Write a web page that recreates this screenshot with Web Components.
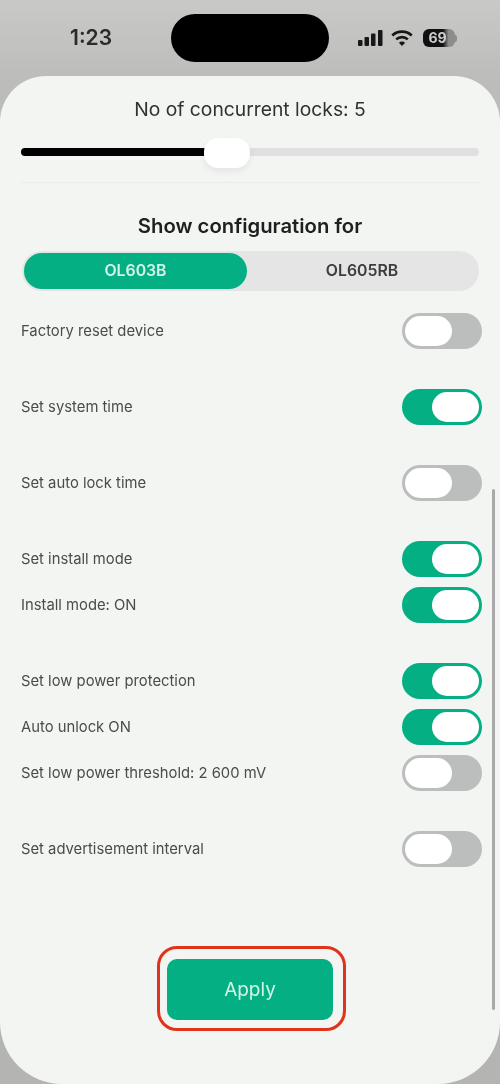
<!DOCTYPE html>
<html>
<head>
<meta charset="utf-8">
<style>
  html, body { margin: 0; padding: 0; height: 100%; }
  body { font-family: Inter, "Liberation Sans", sans-serif; color: #2e3030; }
</style>
</head>
<body>
<phone-screen>
  <status-bar slot="status" time="1:23" battery="69"></status-bar>
  <lock-slider label="No of concurrent locks: 5" percent="45"></lock-slider>
  <segment-picker title="Show configuration for" first="OL603B" second="OL605RB"></segment-picker>
  <setting-group>
    <setting-row>Factory reset device</setting-row>
  </setting-group>
  <setting-group>
    <setting-row on>Set system time</setting-row>
  </setting-group>
  <setting-group>
    <setting-row>Set auto lock time</setting-row>
  </setting-group>
  <setting-group>
    <setting-row on>Set install mode</setting-row>
    <setting-row on>Install mode: ON</setting-row>
  </setting-group>
  <setting-group>
    <setting-row on>Set low power protection</setting-row>
    <setting-row on>Auto unlock ON</setting-row>
    <setting-row>Set low power threshold: 2 600 mV</setting-row>
  </setting-group>
  <setting-group>
    <setting-row>Set advertisement interval</setting-row>
  </setting-group>
  <apply-button slot="footer">Apply</apply-button>
</phone-screen>

<script>
class PhoneScreen extends HTMLElement {
  connectedCallback() {
    this.attachShadow({ mode: 'open' }).innerHTML = `
    <style>
      :host {
        display: flex;
        flex-direction: column;
        width: 500px;
        height: 1084px;
        overflow: hidden;
        background: linear-gradient(#c9cac8 0, #bcbdbb 80px, #b4b5b3 100%);
        filter: blur(.55px);
      }
      .sheet {
        position: relative;
        flex: 1;
        display: flex;
        flex-direction: column;
        background: #f3f5f3;
        border-radius: 46px 46px 62px 62px;
        padding: 20px 21px 53px;
        box-sizing: border-box;
        min-height: 0;
      }
      .body { flex: 1; }
      .scroll {
        position: absolute;
        right: 5px;
        top: 413px;
        width: 3px;
        height: 521px;
        border-radius: 2px;
        background: #a9aaa9;
      }
    </style>
    <slot name="status"></slot>
    <div class="sheet">
      <div class="body"><slot></slot></div>
      <slot name="footer"></slot>
      <div class="scroll"></div>
    </div>`;
  }
}

class StatusBar extends HTMLElement {
  connectedCallback() {
    const time = this.getAttribute('time') || '';
    const battery = this.getAttribute('battery') || '';
    this.attachShadow({ mode: 'open' }).innerHTML = `
    <style>
      :host {
        display: grid;
        grid-template-columns: 171px 158px 171px;
        height: 76px;
        flex: none;
      }
      .time {
        font: 600 21px Inter, "Liberation Sans", sans-serif;
        color: #2a2b2a;
        padding: 26px 0 0 70px;
        line-height: 24px;
      }
      .island {
        margin-top: 14px;
        height: 48px;
        border-radius: 24px;
        background: #000;
      }
      .icons {
        display: flex;
        align-items: center;
        height: 20px;
        margin-top: 28px;
        padding-left: 29px;
      }
      .batt {
        width: 32px;
        height: 18px;
        margin-left: 10px;
        border-radius: 6px;
        background: linear-gradient(90deg, #111 0, #111 62%, #8d8e8c 80%, #8d8e8c 100%);
        color: #ccc;
        font: 700 14px/18px Inter, "Liberation Sans", sans-serif;
        text-align: center;
        padding-right: 3px;
        box-sizing: border-box;
      }
      .tip { width: 2px; height: 7px; border-radius: 0 2px 2px 0; background: #8d8e8c; }
      svg { display: block; flex: none; }
      .wifi { margin-left: 8px; }
    </style>
    <div class="time">${time}</div>
    <div class="island"></div>
    <div class="icons">
      <svg width="25" height="16" viewBox="0 0 25 16" fill="#161716">
        <rect x="0" y="10" width="4.5" height="6" rx="1"/>
        <rect x="6.5" y="7" width="4.5" height="9" rx="1"/>
        <rect x="13" y="3.5" width="4.5" height="12.5" rx="1"/>
        <rect x="20" y="0" width="4.5" height="16" rx="1"/>
      </svg>
      <svg class="wifi" width="22" height="18" viewBox="0 0 24 18" fill="none" stroke="#161716" stroke-width="2.9">
        <path d="M1.4 6.2C7.4 .6 16.6 .6 22.6 6.2"/>
        <path d="M5.6 10.5c3.7-3.3 9.1-3.3 12.8 0"/>
        <path d="M12 17.6l-3.4-3.5c2-1.6 4.8-1.6 6.8 0z" fill="#161716" stroke="none"/>
      </svg>
      <div class="batt">${battery}</div>
      <div class="tip"></div>
    </div>`;
  }
}

class LockSlider extends HTMLElement {
  connectedCallback() {
    const label = this.getAttribute('label') || '';
    const percent = this.getAttribute('percent') || 0;
    this.attachShadow({ mode: 'open' }).innerHTML = `
    <style>
      :host { display: block; }
      .label {
        text-align: center;
        font: 400 19.3px/26px Inter, "Liberation Sans", sans-serif;
        color: #303231;
      }
      .track {
        position: relative;
        display: flex;
        height: 8px;
        margin-top: 26px;
        border-radius: 4px;
        background: #dfe0df;
      }
      .fill { width: ${percent}%; background: #000; border-radius: 4px 0 0 4px; }
      .thumb {
        position: absolute;
        left: 183px;
        top: -10px;
        width: 46px;
        height: 30px;
        border-radius: 14px;
        background: #fff;
        box-shadow: 0 3px 7px rgba(0,0,0,.07);
      }
      hr {
        border: 0;
        height: 1px;
        background: #eaecea;
        margin: 26px 0 0;
      }
    </style>
    <div class="label">${label}</div>
    <div class="track"><div class="fill"></div><div class="thumb"></div></div>
    <hr>`;
  }
}

class SegmentPicker extends HTMLElement {
  connectedCallback() {
    const title = this.getAttribute('title') || '';
    this.removeAttribute('title');
    this.attachShadow({ mode: 'open' }).innerHTML = `
    <style>
      :host { display: block; margin-bottom: 22px; }
      h2 {
        margin: 30px 0 12px;
        text-align: center;
        font: 600 20.3px/26px Inter, "Liberation Sans", sans-serif;
        color: #1e1f1f;
      }
      .seg {
        display: grid;
        grid-template-columns: 223px 1fr;
        height: 40px;
        padding: 2px;
        box-sizing: border-box;
        margin-left: 1px;
        border-radius: 20px;
        background: #e4e5e4;
        font: 600 15.8px/36px Inter, "Liberation Sans", sans-serif;
        text-align: center;
        color: #3c3e3d;
      }
      .on { background: #04b083; color: #d5f3e9; border-radius: 18px; }
    </style>
    <h2>${title}</h2>
    <div class="seg">
      <div class="on">${this.getAttribute('first') || ''}</div>
      <div>${this.getAttribute('second') || ''}</div>
    </div>`;
  }
}

class SettingGroup extends HTMLElement {
  connectedCallback() {
    this.attachShadow({ mode: 'open' }).innerHTML = `
    <style>
      :host { display: flex; flex-direction: column; gap: 10px; margin-bottom: 40px; }
    </style>
    <slot></slot>`;
  }
}

class SettingRow extends HTMLElement {
  connectedCallback() {
    const on = this.hasAttribute('on');
    this.attachShadow({ mode: 'open' }).innerHTML = `
    <style>
      :host {
        display: flex;
        align-items: center;
        justify-content: space-between;
        height: 36px;
        margin-right: -3px;
        font: 400 14.8px Inter, "Liberation Sans", sans-serif;
        color: #4a4c4b;
      }
      .sw {
        display: flex;
        width: 80px;
        height: 36px;
        padding: 3px;
        box-sizing: border-box;
        border-radius: 18px;
        background: ${on ? '#04b083' : '#bcbdbd'};
        justify-content: ${on ? 'flex-end' : 'flex-start'};
      }
      .knob { width: 47px; height: 30px; border-radius: 15px; background: #fff; }
    </style>
    <span><slot></slot></span>
    <div class="sw"><div class="knob"></div></div>`;
  }
}

class ApplyButton extends HTMLElement {
  connectedCallback() {
    this.attachShadow({ mode: 'open' }).innerHTML = `
    <style>
      :host {
        display: block;
        align-self: center;
        box-sizing: border-box;
        width: 189px;
        height: 85px;
        padding: 10px 0 0 7px;
        margin-left: 3px;
        border: 3px solid #e0341a;
        border-radius: 20px;
      }
      button {
        all: unset;
        display: block;
        box-sizing: border-box;
        width: 166px;
        height: 61px;
        border-radius: 10px;
        background: #04b083;
        color: #d5f3e9;
        text-align: center;
        font: 400 19px/61px Inter, "Liberation Sans", sans-serif;
      }
    </style>
    <button><slot></slot></button>`;
  }
}

customElements.define('phone-screen', PhoneScreen);
customElements.define('status-bar', StatusBar);
customElements.define('lock-slider', LockSlider);
customElements.define('segment-picker', SegmentPicker);
customElements.define('setting-group', SettingGroup);
customElements.define('setting-row', SettingRow);
customElements.define('apply-button', ApplyButton);
</script>
</body>
</html>
